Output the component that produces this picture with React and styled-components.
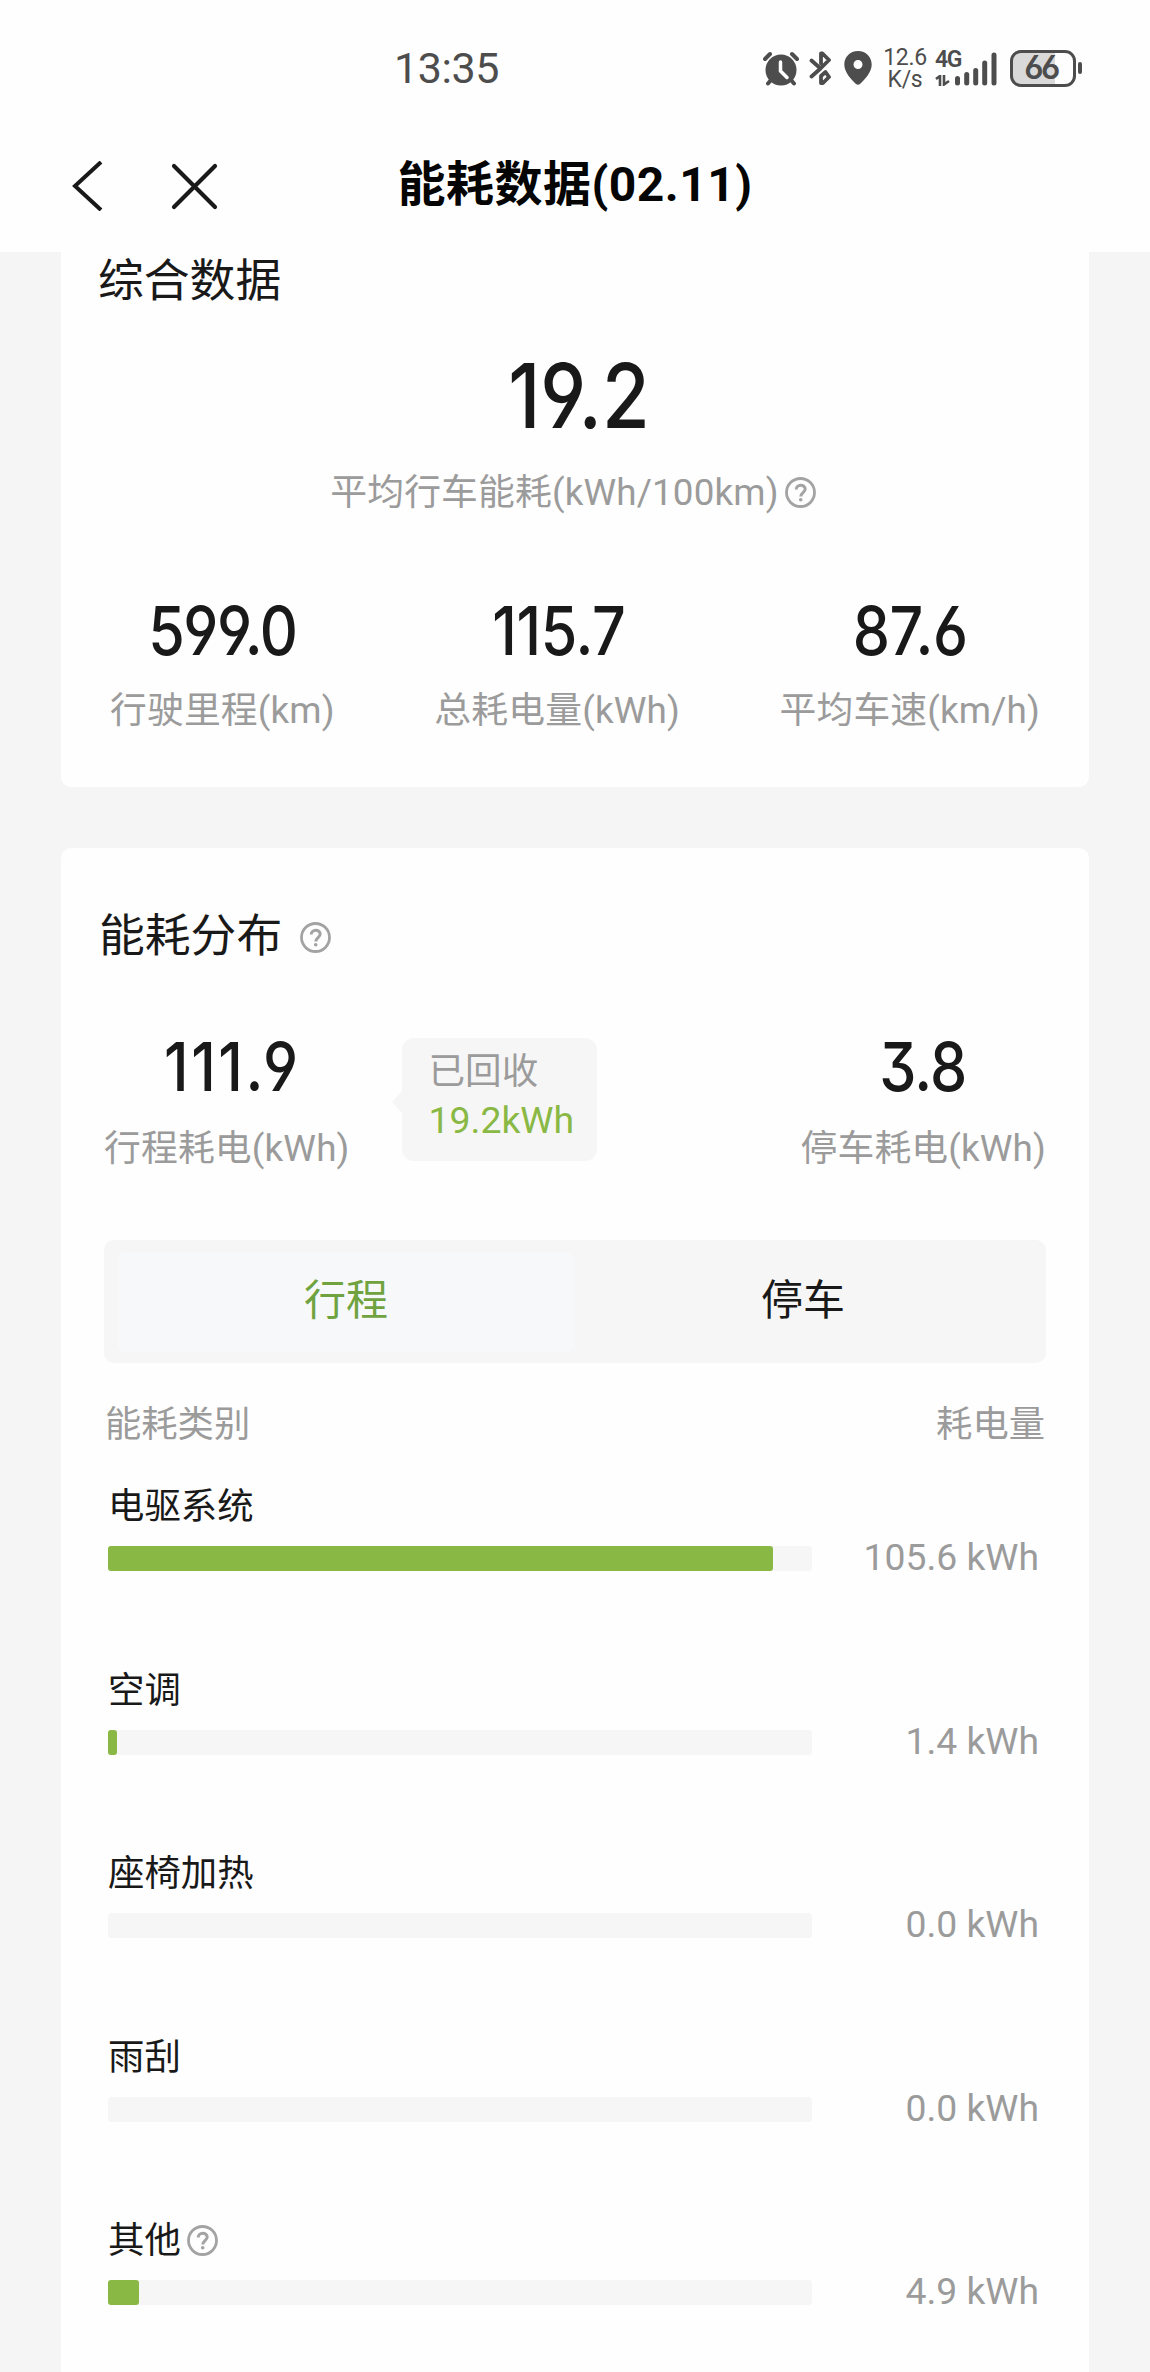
import React from "react";
import styled, { createGlobalStyle } from "styled-components";

const ink = "#191919";
const muted = "#9b9b9b";
const green = "#8ab844";
const statusInk = "#4d4d4d";
const mixedFont = `Roboto, "Noto Sans CJK SC", sans-serif`;

const GlobalStyle = createGlobalStyle`
  * { box-sizing: border-box; }
  body {
    margin: 0;
    background: #f5f5f5;
    font-family: "Noto Sans CJK SC", "Noto Sans", sans-serif;
    color: ${ink};
  }
`;

const Screen = styled.div`
  width: 1150px;
  height: 2372px;
  overflow: hidden;
  display: flex;
  flex-direction: column;
  background: #f5f5f5;
`;

const Header = styled.header`
  flex: none;
  height: 252px;
  background: #fefefe;
`;

const StatusBar = styled.div`
  height: 136px;
  padding: 0 68px 0 394px;
  display: flex;
  align-items: center;
  justify-content: space-between;
  color: ${statusInk};
`;

const Clock = styled.div`
  font: 400 43px/50px Roboto, sans-serif;
  letter-spacing: -0.4px;
`;

const StatusIcons = styled.div`
  display: flex;
  align-items: center;
  svg { display: block; flex: none; }
`;

const StatusGlyph = styled.div`
  margin-right: ${(p) => p.$gap}px;
`;

const NetSpeed = styled.div`
  width: 44px;
  margin: 2px 8px 0 11px;
  display: flex;
  flex-direction: column;
  align-items: center;
  font: 400 23px/22px Roboto, sans-serif;
  letter-spacing: -0.3px;
`;

const Cellular = styled.div`
  width: 63px;
  height: 36px;
  display: flex;
  align-items: flex-end;
`;

const NetType = styled.div`
  flex: none;
  width: 26px;
  height: 36px;
  display: flex;
  flex-direction: column;
  justify-content: space-between;
  font: 600 23px/20px Roboto, sans-serif;
  letter-spacing: -1.4px;
`;

const SignalLevel = styled.div`
  margin-left: -7px;
`;

const Battery = styled.div`
  width: 66px;
  height: 37px;
  margin-left: 12px;
  padding-right: 4px;
  border: 3px solid ${statusInk};
  border-radius: 11px;
  background: linear-gradient(to right, #d9d9d9 0 42px, transparent 42px);
  font: 600 32px/30px Inter, sans-serif;
  font-feature-settings: "cv03";
  letter-spacing: -2.6px;
  text-align: center;
`;

const BatteryTip = styled.div`
  width: 4px;
  height: 12px;
  margin-left: 2px;
  border-radius: 2px;
  background: ${statusInk};
`;

const NavBar = styled.div`
  height: 100px;
  display: grid;
  grid-template-columns: 300px 1fr 300px;
  align-items: center;
`;

const NavButtons = styled.div`
  display: flex;
  align-items: center;
  gap: 67px;
  padding-left: 71px;
  svg { display: block; }
`;

const PageTitle = styled.h1`
  margin: 0;
  font-family: ${mixedFont};
  font-size: 48px;
  line-height: 98px;
  height: 100px;
  font-weight: 700;
  letter-spacing: 0.5px;
  color: #050505;
  text-align: center;
  white-space: nowrap;
`;

const Card = styled.section`
  flex: none;
  width: 1028px;
  margin-left: 61px;
  background: #fefefe;
`;

const SummaryCard = styled(Card)`
  height: 535px;
  padding: 1px 49px 0;
  border-radius: 0 0 10px 10px;
`;

const DetailCard = styled(Card)`
  height: 1524px;
  margin-top: 61px;
  padding: 60px 43px 0;
  border-radius: 10px 10px 0 0;
`;

const CardTitle = styled.h2`
  margin: 0 0 0 ${(p) => p.$shift}px;
  display: flex;
  align-items: center;
  gap: 18px;
  font-size: 45.8px;
  line-height: 48px;
  font-weight: 400;
  svg { margin-top: 10px; }
`;

const Figure = styled.div`
  font-family: Inter, sans-serif;
  font-weight: 450;
  font-size: ${(p) => p.$size || 68}px;
  line-height: ${(p) => (p.$size ? 90 : 70)}px;
  letter-spacing: ${(p) => p.$track ?? -2}px;
  padding-left: ${(p) => p.$indent || 0}px;
  font-feature-settings: "cv03", "cv04", "cv09";
  text-align: center;
  transform: scaleX(0.87);
`;

const Label = styled.div`
  display: flex;
  justify-content: center;
  align-items: center;
  gap: 6px;
  margin-bottom: -8px;
  font-family: ${mixedFont};
  font-size: 36.8px;
  letter-spacing: 0.15px;
  line-height: 52px;
  color: ${muted};
  white-space: nowrap;
  svg { margin-top: -2px; }
`;

const Average = styled.div`
  margin-top: 50px;
  ${Label} { margin-top: 26px; padding-right: 4px; }
`;

const Totals = styled.div`
  margin-top: 84px;
  display: flex;
  justify-content: space-between;
  ${Label} { margin-top: 20px; }
`;

const Split = styled.div`
  margin-top: 75px;
  height: 136px;
  display: flex;
  align-items: flex-start;
  ${Label} { margin-top: 22px; }
`;

const Metric = styled.div`
  margin-left: ${(p) => (p.$end ? "auto" : 0)};
`;

const Bubble = styled.div`
  position: relative;
  width: 195px;
  height: 123px;
  margin: 7px 0 0 52px;
  padding: 9px 0 0 27px;
  border-radius: 12px;
  background: #f6f6f6;
  font-size: 36.6px;
  line-height: 44px;
  color: ${muted};
  white-space: nowrap;
  &::before {
    content: "";
    position: absolute;
    left: -10px;
    top: 53px;
    border: solid transparent;
    border-width: 11px 10px 11px 0;
    border-right-color: #f6f6f6;
  }
`;

const Recovered = styled.div`
  font-family: ${mixedFont};
  font-size: 37.4px;
  line-height: 58px;
  color: ${green};
`;

const Tabs = styled.div`
  margin-top: 73px;
  height: 123px;
  padding: 12px 0 11px 14px;
  display: flex;
  border-radius: 10px;
  background: #f6f6f6;
`;

const Tab = styled.div`
  width: ${(p) => (p.$active ? 456 : 458)}px;
  border-radius: 8px;
  background: ${(p) => (p.$active ? "#f6f8fa" : "transparent")};
  color: ${(p) => (p.$active ? "#70a33f" : ink)};
  font-size: 42px;
  line-height: 89px;
  text-align: center;
`;

const ListHead = styled.div`
  margin-top: 36px;
  padding: 0 1px 0 1px;
  display: flex;
  justify-content: space-between;
  font-size: 36.3px;
  line-height: 44px;
  color: ${muted};
`;

const Usage = styled.div`
  margin-top: 38px;
  padding: 0 7px 0 4px;
`;

const UsageRow = styled.div`
  height: 183.6px;
`;

const UsageName = styled.div`
  display: flex;
  align-items: center;
  gap: 6px;
  font-size: 36.4px;
  line-height: 44px;
  svg { margin-top: 6px; }
`;

const UsageMeter = styled.div`
  margin-top: 21px;
  display: flex;
  justify-content: space-between;
  align-items: flex-start;
`;

const Track = styled.div`
  width: 704px;
  height: 25px;
  border-radius: 3px;
  background: #f6f6f6;
`;

const Fill = styled.div`
  height: 25px;
  border-radius: 3px;
  background: ${green};
`;

const UsageValue = styled.div`
  font-family: ${mixedFont};
  font-size: 37.3px;
  line-height: 22px;
  color: ${muted};
  white-space: nowrap;
`;

const Help = () => (
  <svg width="31" height="31" viewBox="0 0 31 31" fill="none" stroke="#a3a3a3" strokeWidth="2.8">
    <circle cx="15.5" cy="15.5" r="14" />
    <path d="M11.2 12.6c0-5.8 9-5.6 9-.5 0 3.5-4.4 3.5-4.4 7.3" strokeWidth="3" />
    <circle cx="15.7" cy="22.8" r="1.8" fill="#a3a3a3" stroke="none" />
  </svg>
);

const AlarmIcon = () => (
  <svg width="36" height="35" viewBox="0 0 36 35" fill="none" stroke={statusInk} strokeLinecap="round">
    <circle cx="18" cy="19" r="15.5" fill={statusInk} stroke="none" />
    <path d="M2 8l5-5M34 8l-5-5" strokeWidth="4" />
    <path d="M8 29l-3 3.500M28 29l3 3.500" strokeWidth="4" />
    <path d="M17.500 11v9l6.500 6.500" stroke="#fefefe" strokeWidth="3.500" />
  </svg>
);

const BluetoothIcon = () => (
  <svg width="23" height="35" viewBox="0 0 23 35" fill="none" stroke={statusInk} strokeWidth="3.800" strokeLinejoin="round" strokeLinecap="round">
    <path d="M2.500 9.500l9 8L20 9l-6.500-6.500h-1.500v10M2.500 25.500l9-8M20 26l-6 6h-2v-7l4.500-4z" />
  </svg>
);

const PinIcon = () => (
  <svg width="28" height="34" viewBox="0 0 28 34">
    <path fillRule="evenodd" fill={statusInk} d="M14 0C6 0 .3 6 .3 13.600.3 21.500 7.500 29 12 33q2 1.500 4 0c4.500-4 11.700-11.500 11.700-19.400C27.700 6 22 0 14 0zm0 9a4.500 4.500 0 1 1 0 9 4.500 4.500 0 0 1 0-9z" />
  </svg>
);

const DataArrows = () => (
  <svg width="15" height="11" viewBox="0 0 15 11" fill="none" stroke={statusInk} strokeWidth="2.600">
    <path d="M1 4l4-3v10M9 0v9.500l5-3.500" />
  </svg>
);

const SignalBars = () => (
  <svg width="43" height="35" viewBox="0 0 43 35" stroke={statusInk} strokeWidth="5" strokeLinecap="round">
    <path d="M3.500 27.500v4.500M12.700 23.500v8.500M21.700 19.500v12.500M30.700 12v20M40 4v28" />
  </svg>
);

const BackIcon = () => (
  <svg width="32" height="50" viewBox="0 0 32 50" fill="none" stroke={ink} strokeWidth="4">
    <path d="M30 1L4 25l26 24" />
  </svg>
);

const CloseIcon = () => (
  <svg width="48" height="48" viewBox="0 0 48 48" stroke={ink} strokeWidth="4.200" strokeLinecap="round">
    <path d="M4 4l41 41M45 4L4 45" />
  </svg>
);

const totals = [
  { value: "599.0", label: "行驶里程(km)", track: -1.6, indent: 0 },
  { value: "115.7", label: "总耗电量(kWh)", track: -0.4, indent: 5 },
  { value: "87.6", label: "平均车速(km/h)", track: -0.5, indent: 0 },
];

const usage = [
  { name: "电驱系统", value: "105.6 kWh", fill: 665 },
  { name: "空调", value: "1.4 kWh", fill: 9 },
  { name: "座椅加热", value: "0.0 kWh", fill: 0 },
  { name: "雨刮", value: "0.0 kWh", fill: 0 },
  { name: "其他", value: "4.9 kWh", fill: 31, help: true },
];

export default function App() {
  return (
    <Screen>
      <GlobalStyle />
      <Header>
        <StatusBar>
          <Clock>13:35</Clock>
          <StatusIcons>
            <StatusGlyph $gap={10}>
              <AlarmIcon />
            </StatusGlyph>
            <StatusGlyph $gap={12}>
              <BluetoothIcon />
            </StatusGlyph>
            <StatusGlyph $gap={0}>
              <PinIcon />
            </StatusGlyph>
            <NetSpeed>
              <span>12.6</span>
              <span>K/s</span>
            </NetSpeed>
            <Cellular>
              <NetType>
                4G
                <DataArrows />
              </NetType>
              <SignalLevel>
                <SignalBars />
              </SignalLevel>
            </Cellular>
            <Battery>66</Battery>
            <BatteryTip />
          </StatusIcons>
        </StatusBar>
        <NavBar>
          <NavButtons>
            <BackIcon />
            <CloseIcon />
          </NavButtons>
          <PageTitle>能耗数据(02.11)</PageTitle>
        </NavBar>
      </Header>

      <SummaryCard>
        <CardTitle $shift={-12}>综合数据</CardTitle>
        <Average>
          <Figure $size={89} $track={0} $indent={9}>
            19.2
          </Figure>
          <Label>
            平均行车能耗(kWh/100km)
            <Help />
          </Label>
        </Average>
        <Totals>
          {totals.map((t) => (
            <Metric key={t.label}>
              <Figure $track={t.track} $indent={t.indent}>
                {t.value}
              </Figure>
              <Label>{t.label}</Label>
            </Metric>
          ))}
        </Totals>
      </SummaryCard>

      <DetailCard>
        <CardTitle $shift={-5}>
          能耗分布
          <Help />
        </CardTitle>
        <Split>
          <Metric>
            <Figure $track={3} $indent={13}>
              111.9
            </Figure>
            <Label>行程耗电(kWh)</Label>
          </Metric>
          <Bubble>
            已回收
            <Recovered>19.2kWh</Recovered>
          </Bubble>
          <Metric $end>
            <Figure $track={-1}>3.8</Figure>
            <Label>停车耗电(kWh)</Label>
          </Metric>
        </Split>
        <Tabs>
          <Tab $active>行程</Tab>
          <Tab>停车</Tab>
        </Tabs>
        <ListHead>
          <span>能耗类别</span>
          <span>耗电量</span>
        </ListHead>
        <Usage>
          {usage.map((u) => (
            <UsageRow key={u.name}>
              <UsageName>
                {u.name}
                {u.help && <Help />}
              </UsageName>
              <UsageMeter>
                <Track>
                  <Fill style={{ width: u.fill }} />
                </Track>
                <UsageValue>{u.value}</UsageValue>
              </UsageMeter>
            </UsageRow>
          ))}
        </Usage>
      </DetailCard>
    </Screen>
  );
}
